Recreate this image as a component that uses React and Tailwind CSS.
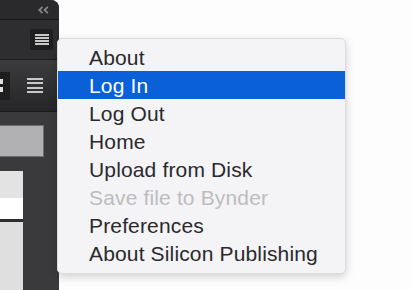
import React from 'react';

const items = [
  { label: 'About' },
  { label: 'Log In', active: true },
  { label: 'Log Out' },
  { label: 'Home' },
  { label: 'Upload from Disk' },
  { label: 'Save file to Bynder', disabled: true },
  { label: 'Preferences' },
  { label: 'About Silicon Publishing' },
];

function Lines({ className }) {
  return (
    <div className={`flex flex-col justify-between ${className}`}>
      <span className="block h-[2px] bg-[#c8c8c8]" />
      <span className="block h-[2px] bg-[#c8c8c8]" />
      <span className="block h-[2px] bg-[#c8c8c8]" />
      <span className="block h-[2px] bg-[#c8c8c8]" />
    </div>
  );
}

export default function App() {
  return (
    <div
      className="relative w-[412px] h-[290px] overflow-hidden bg-[#fdfdfd] flex"
      style={{ fontFamily: '"Liberation Sans", Arial, sans-serif' }}
    >
      {/* Panel */}
      <div className="w-[59px] h-full flex flex-col bg-[#3a393c] rounded-tr-[8px] overflow-hidden">
        <div className="h-[20px] bg-[#2a292b] flex items-center justify-end pr-[10px] border-b border-[#19191a]">
          <svg width="11" height="8" viewBox="0 0 11 8" fill="none" stroke="#858587" strokeWidth="1.8">
            <path d="M4.5 0.8 L1.3 4 L4.5 7.2" />
            <path d="M9.8 0.8 L6.6 4 L9.8 7.2" />
          </svg>
        </div>
        <div className="h-[40px] bg-[#2e2d2f] flex items-start justify-end pt-[9px] pr-[6px] border-b border-[#1c1c1d]">
          <div className="w-[23px] h-[21px] bg-[#1f1f20] rounded-[2px] flex items-center justify-center">
            <Lines className="w-[14px] h-[11px]" />
          </div>
        </div>
        <div className="h-[52px] bg-gradient-to-b from-[#3c3b3e] to-[#262527] flex items-center border-b border-[#1a1a1b]">
          <div className="w-[10px] h-[28px] bg-[#1e1e1f] flex flex-col justify-center gap-[3px]">
            <span className="block w-[3px] h-[5px] bg-[#e0e0e0]" />
            <span className="block w-[3px] h-[5px] bg-[#e0e0e0]" />
          </div>
          <Lines className="ml-[17px] w-[16px] h-[15px]" />
        </div>
        <div className="flex-1 flex flex-col pt-[13px]">
          <div className="w-[44px] h-[32px] bg-[#b1b0b3] border border-[#6d6c70] border-l-0" />
          <div className="mt-[14px] w-[23px] flex-1 flex flex-col">
            <div className="h-[27px] bg-[#e3e3e4]" />
            <div className="h-[21px] bg-white" />
            <div className="h-[3px] bg-[#2c2b2d]" />
            <div className="flex-1 bg-[#dfdfe0]" />
          </div>
        </div>
      </div>

      {/* Dropdown menu */}
      <div className="absolute left-[57px] top-[38px] w-[289px] h-[236px] bg-[#f4f3f5] rounded-[5px] border border-[#dcdbdd] shadow-[0_3px_10px_rgba(0,0,0,0.18)] pt-[4px] overflow-hidden">
        {items.map((it) => (
          <div
            key={it.label}
            className={`h-[28px] pl-[31px] flex items-center text-[21px] leading-none tracking-[0.15px] ${
              it.active
                ? 'bg-[#0a60d9] text-white'
                : it.disabled
                ? 'text-[#bdbcbf]'
                : 'text-[#2a2a2c]'
            }`}
          >
            {it.label}
          </div>
        ))}
      </div>
    </div>
  );
}
